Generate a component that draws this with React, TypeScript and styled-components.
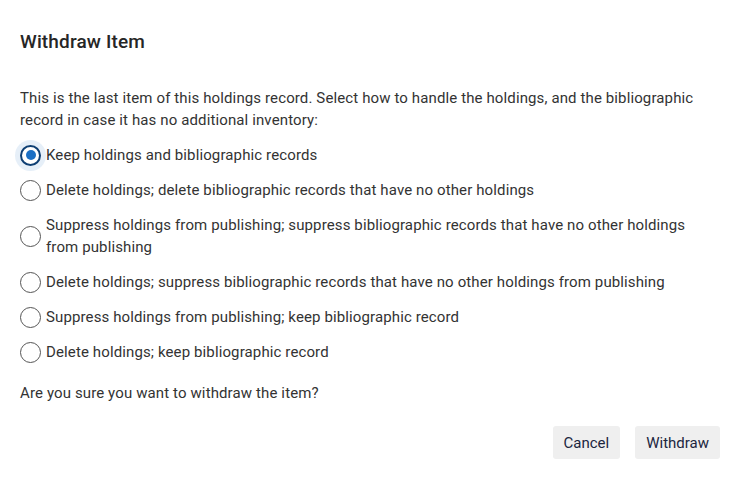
import React, { useState } from "react";
import styled, { createGlobalStyle } from "styled-components";

const Global = createGlobalStyle`
  html, body { margin: 0; padding: 0; background: #ffffff; }
  body { font-family: Roboto, "Liberation Sans", Arial, sans-serif; color: #333; }
`;

const Dialog = styled.div`
  width: 753px;
  box-sizing: border-box;
  padding: 30px 35px 0 20px;
  display: flex;
  flex-direction: column;
`;

const Title = styled.h2`
  margin: 0;
  font-size: 19px;
  line-height: 24px;
  font-weight: 500;
  letter-spacing: 0.15px;
  color: #262626;
`;

const Text = styled.p<{ $mt: number }>`
  margin: ${(p) => p.$mt}px 0 0 0;
  font-size: 15px;
  line-height: 22px;
  letter-spacing: 0.12px;
  color: #333;
`;

const Options = styled.div`
  display: flex;
  flex-direction: column;
  margin-top: 6.5px;
`;

const Row = styled.label`
  display: flex;
  align-items: center;
  gap: 5px;
  padding: 6.5px 0;
  font-size: 15px;
  line-height: 22px;
  letter-spacing: 0.12px;
  color: #333;
  cursor: pointer;
`;

const Radio = styled.input.attrs({ type: "radio" })`
  appearance: none;
  -webkit-appearance: none;
  margin: 0;
  flex: 0 0 auto;
  width: 21px;
  height: 21px;
  border-radius: 50%;
  border: 1.5px solid #555;
  box-sizing: border-box;
  background: #fff;
  display: grid;
  place-items: center;
  &:checked {
    border: 2.5px solid #0e3f73;
    box-shadow: 0 0 0 5px rgba(60, 130, 200, 0.13);
  }
  &:checked::after {
    content: "";
    width: 10px;
    height: 10px;
    border-radius: 50%;
    background: #1b6fc4;
  }
`;

const Actions = styled.div`
  display: flex;
  justify-content: flex-end;
  gap: 15px;
  margin-top: 22px;
  margin-right: -2px;
`;

const Button = styled.button`
  height: 33px;
  padding: 0 11px;
  border: none;
  border-radius: 3px;
  background: #efefef;
  color: #1c2640;
  font-family: Roboto, "Liberation Sans", Arial, sans-serif;
  font-size: 15px;
  cursor: pointer;
`;

const options = [
  "Keep holdings and bibliographic records",
  "Delete holdings; delete bibliographic records that have no other holdings",
  "Suppress holdings from publishing; suppress bibliographic records that have no other holdings from publishing",
  "Delete holdings; suppress bibliographic records that have no other holdings from publishing",
  "Suppress holdings from publishing; keep bibliographic record",
  "Delete holdings; keep bibliographic record",
];

export default function App() {
  const [sel, setSel] = useState(0);
  return (
    <>
      <Global />
      <Dialog>
        <Title>Withdraw Item</Title>
        <Text $mt={33}>
          This is the last item of this holdings record. Select how to handle the holdings, and the bibliographic
          record in case it has no additional inventory:
        </Text>
        <Options>
          {options.map((o, i) => (
            <Row key={i}>
              <Radio name="opt" checked={sel === i} onChange={() => setSel(i)} />
              <span>{o}</span>
            </Row>
          ))}
        </Options>
        <Text $mt={12.5}>Are you sure you want to withdraw the item?</Text>
        <Actions>
          <Button>Cancel</Button>
          <Button>Withdraw</Button>
        </Actions>
      </Dialog>
    </>
  );
}
